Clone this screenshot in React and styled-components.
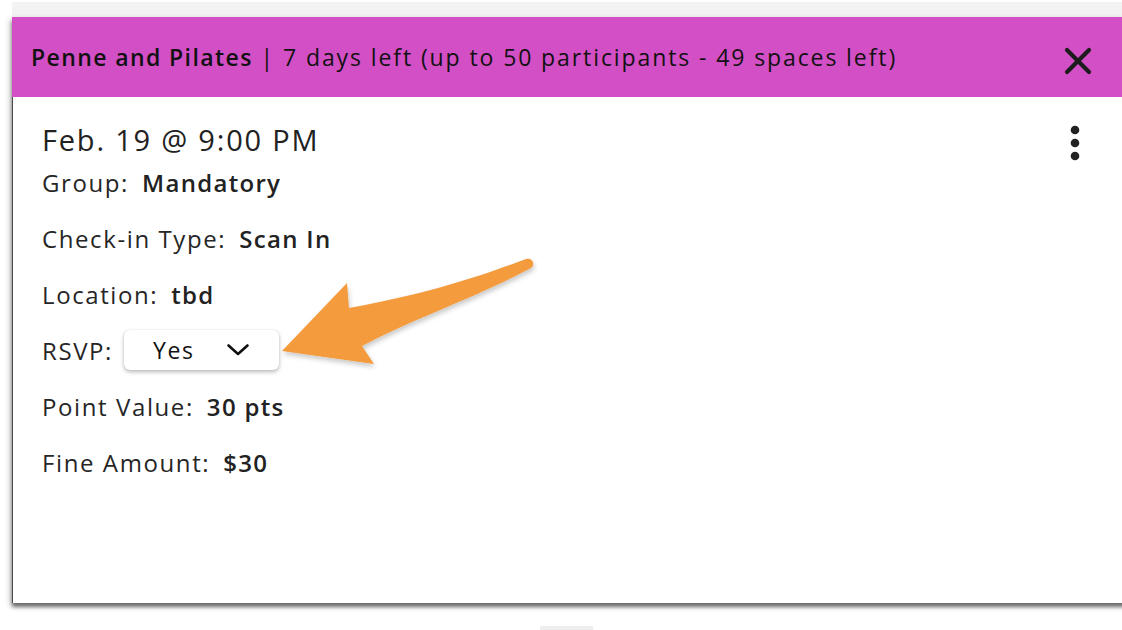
import styled, { createGlobalStyle } from 'styled-components';

const GlobalStyle = createGlobalStyle`
  html, body {
    margin: 0;
    padding: 0;
    background: #ffffff;
    overflow: hidden;
  }
  body {
    font-family: "Open Sans", "Noto Sans", sans-serif;
    color: #222222;
  }
`;

// Layout
const Page = styled.div`
  position: relative;
  width: 1122px;
  height: 630px;
  padding: 2px 0 0 12px;
  box-sizing: border-box;
  display: flex;
  flex-direction: column;
`;

const TopStrip = styled.div`
  height: 15px;
  background: #f3f3f3;
`;

const Card = styled.div`
  width: 1116px;
  height: 586px;
  display: flex;
  flex-direction: column;
  background: #ffffff;
  box-shadow: 0 4px 4px rgba(0, 0, 0, 0.55), -3px 2px 6px rgba(0, 0, 0, 0.12);
`;

const Header = styled.div`
  height: 80px;
  background: #d34fc5;
  display: flex;
  align-items: center;
  justify-content: space-between;
  padding: 0 36px 0 19px;
  box-sizing: border-box;
  flex-shrink: 0;
`;

const Title = styled.div`
  font-size: 23px;
  letter-spacing: 1.9px;
  color: #111111;
`;

const TitleStrong = styled.span`
  font-weight: 600;
  letter-spacing: 1.4px;
`;

const IconButton = styled.button`
  border: 0;
  background: transparent;
  padding: 0;
  display: flex;
  cursor: pointer;
  margin-top: ${(p) => p.$offset || '0'};
`;

const Body = styled.div`
  flex: 1;
  border-left: 1px solid #4a4a4a;
  padding: 26px 47px 0 29px;
  display: flex;
  justify-content: space-between;
  align-items: flex-start;
`;

const Details = styled.div`
  display: flex;
  flex-direction: column;
`;

const DateLine = styled.div`
  font-size: 29px;
  letter-spacing: 1.8px;
  line-height: 34px;
  color: #222222;
  margin-bottom: 11px;
`;

const Row = styled.div`
  display: flex;
  align-items: center;
  height: 56px;
  font-size: 24px;
  letter-spacing: 1.6px;
  margin-top: ${(p) => (p.$first ? '-14px' : '0')};
`;

const Label = styled.span`
  color: #262626;
  margin-right: 13px;
`;

const Value = styled.span`
  font-weight: 600;
  letter-spacing: 1.3px;
  color: #222222;
`;

const Select = styled.div`
  width: 155px;
  height: 40px;
  border-radius: 6px;
  background: #ffffff;
  box-shadow: 0 2px 4px rgba(0, 0, 0, 0.28), 0 0 1px rgba(0, 0, 0, 0.15);
  display: flex;
  align-items: center;
  justify-content: space-between;
  padding: 0 29px 0 29px;
  box-sizing: border-box;
  font-size: 23px;
  letter-spacing: 1.6px;
  color: #111111;
  margin-left: -2px;
`;

const Handle = styled.div`
  width: 53px;
  height: 4px;
  background: #eeeeee;
  margin: 23px 0 0 528px;
`;

const Annotation = styled.svg`
  position: absolute;
  left: 0;
  top: 0;
  pointer-events: none;
`;

function CloseIcon() {
  return (
    <svg width="28" height="28" viewBox="0 0 28 28">
      <path d="M3 3 L25 25 M25 3 L3 25" stroke="#1c1c1c" strokeWidth="4.2" strokeLinecap="round" />
    </svg>
  );
}

function KebabIcon() {
  return (
    <svg width="12" height="40" viewBox="0 0 12 40">
      <circle cx="6" cy="7" r="4.3" fill="#222" />
      <circle cx="6" cy="20" r="4.3" fill="#222" />
      <circle cx="6" cy="33" r="4.3" fill="#222" />
    </svg>
  );
}

function Chevron() {
  return (
    <svg width="24" height="14" viewBox="0 0 24 14">
      <path d="M2.5 2.5 L12 11 L21.5 2.5" fill="none" stroke="#111" strokeWidth="2.6" strokeLinecap="round" strokeLinejoin="round" />
    </svg>
  );
}

const rows = [
  ['Group:', 'Mandatory'],
  ['Check-in Type:', 'Scan In'],
  ['Location:', 'tbd'],
  ['RSVP:', null],
  ['Point Value:', '30 pts'],
  ['Fine Amount:', '$30'],
];

export default function App() {
  return (
    <>
      <GlobalStyle />
      <Page>
        <TopStrip />
        <Card>
          <Header>
            <Title>
              <TitleStrong>Penne and Pilates</TitleStrong> | 7 days left (up to 50 participants - 49 spaces left)
            </Title>
            <IconButton aria-label="Close" $offset="8px">
              <CloseIcon />
            </IconButton>
          </Header>
          <Body>
            <Details>
              <DateLine>Feb. 19 @ 9:00 PM</DateLine>
              {rows.map(([label, value], i) => (
                <Row key={label} $first={i === 0}>
                  <Label>{label}</Label>
                  {value === null ? (
                    <Select>
                      Yes
                      <Chevron />
                    </Select>
                  ) : (
                    <Value>{value}</Value>
                  )}
                </Row>
              ))}
            </Details>
            <IconButton aria-label="More options">
              <KebabIcon />
            </IconButton>
          </Body>
        </Card>
        <Handle />
        <Annotation width="1122" height="630" viewBox="0 0 1122 630">
          <defs>
            <filter id="arrowShadow" x="-10%" y="-20%" width="130%" height="150%">
              <feDropShadow dx="1" dy="3" stdDeviation="2.5" floodColor="#000" floodOpacity="0.22" />
            </filter>
          </defs>
          <path
            d="M282 351 L347 283 L349 308 C420 295 470 280 526 259 C532 257 536 264 531 268 C470 300 410 320 362 346 L374 364 Z"
            fill="#f39b3e"
            filter="url(#arrowShadow)"
          />
        </Annotation>
      </Page>
    </>
  );
}
